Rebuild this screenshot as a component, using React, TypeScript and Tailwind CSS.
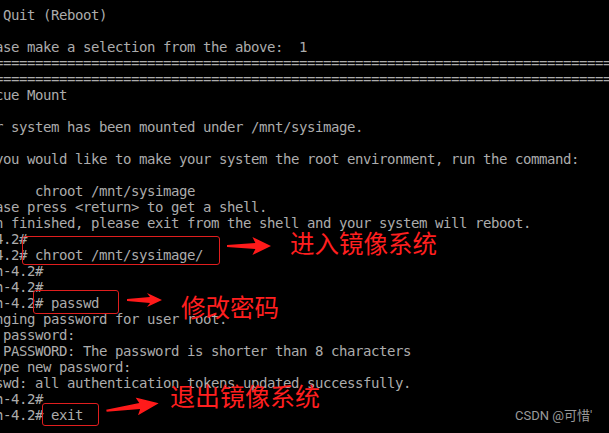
// Rescue-mode console with red annotations
import React from "react";

const lines = [
  "    Quit (Reboot)",
  "",
  "Please make a selection from the above:  1",
  "================================================================================",
  "================================================================================",
  "Rescue Mount",
  "",
  "Your system has been mounted under /mnt/sysimage.",
  "",
  "If you would like to make your system the root environment, run the command:",
  "",
  "        chroot /mnt/sysimage",
  "Please press <return> to get a shell.",
  "When finished, please exit from the shell and your system will reboot.",
  "sh-4.2#",
  "sh-4.2# chroot /mnt/sysimage/",
  "bash-4.2#",
  "bash-4.2#",
  "bash-4.2# passwd",
  "Changing password for user root.",
  "New password:",
  "BAD PASSWORD: The password is shorter than 8 characters",
  "Retype new password:",
  "passwd: all authentication tokens updated successfully.",
  "bash-4.2#",
  "bash-4.2# exit",
];

function Arrow({ w, h, className }: { w: number; h: number; className: string }) {
  // thin tail widening toward a barbed head
  const hb = w * 0.6;
  const mid = h / 2;
  return (
    <svg width={w} height={h} viewBox={`0 0 ${w} ${h}`} className={className}>
      <polygon
        points={`0,${mid - 1} ${hb + 2},${mid - 3} ${hb - 1},0 ${w},${mid} ${hb - 1},${h} ${hb + 2},${mid + 3} 0,${mid + 1}`}
        fill="#ff1a1a"
      />
    </svg>
  );
}

export default function App() {
  return (
    <div className="relative w-[609px] h-[433px] overflow-hidden bg-black">
      <div className="pt-[7px] -ml-[29px] font-['DejaVu_Sans_Mono','Liberation_Mono',monospace] text-[14px] tracking-[-0.43px] text-[#acacac]">
        {lines.map((l, i) => (
          <div key={i} className="h-4 leading-4 whitespace-pre">
            {l}
          </div>
        ))}
      </div>

      {/* annotations */}
      <div className="absolute left-[22px] top-[236px] w-[198px] h-[29px] rounded-[3px] border border-[#e01e1e]" />
      <Arrow w={44} h={18} className="absolute left-[227px] top-[237px]" />
      <div className="absolute left-[290px] top-[231px] text-[24.5px] leading-none text-[#ff1f1f] font-['Noto_Sans_CJK_SC',sans-serif]">
        进入镜像系统
      </div>

      <div className="absolute left-[33px] top-[290px] w-[86px] h-[24px] rounded-[3px] border border-[#e01e1e]" />
      <Arrow w={35} h={14} className="absolute left-[127px] top-[293px]" />
      <div className="absolute left-[181px] top-[295px] text-[24.5px] leading-none text-[#ff1f1f] font-['Noto_Sans_CJK_SC',sans-serif]">
        修改密码
      </div>

      <div className="absolute left-[42px] top-[403px] w-[57px] h-[23px] rounded-[3px] border border-[#e01e1e]" />
      <Arrow w={53} h={18} className="absolute left-[106px] top-[398px] -rotate-[8deg]" />
      <div className="absolute left-[170px] top-[383px] text-[25px] leading-none text-[#ff1f1f] font-['Noto_Sans_CJK_SC',sans-serif]">
        退出镜像系统
      </div>

      <div className="absolute left-[515px] top-[409px] text-[13px] leading-none text-[#9a9a9a] font-['Roboto','Noto_Sans_CJK_SC',sans-serif]">
        CSDN @可惜'
      </div>
    </div>
  );
}
